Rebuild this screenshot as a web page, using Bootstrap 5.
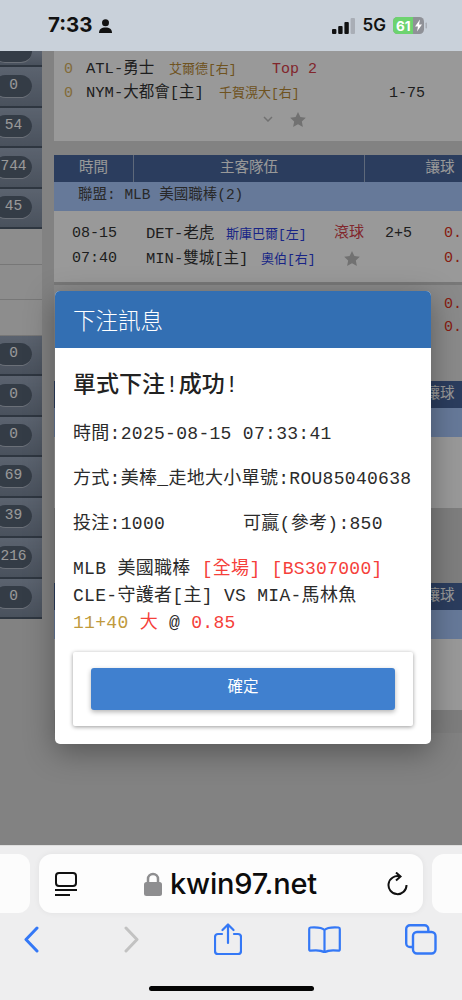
<!DOCTYPE html>
<html lang="zh-Hant">
<head>
  <meta charset="UTF-8">
  <meta name="viewport" content="width=device-width, initial-scale=1.0">
  <title>下注訊息</title>
  <link href="https://cdn.jsdelivr.net/npm/bootstrap@5.3.0/dist/css/bootstrap.min.css" rel="stylesheet">
  <style>
    html, body { width: 462px; height: 1000px; overflow: hidden; }
    body { font-family: "Liberation Mono", "Noto Sans CJK TC", monospace; color: #333; background: #eeeeef; }
    .sans { font-family: "Inter", "Liberation Sans", sans-serif; }

    /* status bar */
    .status-bar { height: 51px; background: #c9d1da; padding: 0 34px 0 48px; flex: none; }
    .clock { font-size: 20.5px; font-weight: 700; color: #111; line-height: 1; }
    .person-gap { gap: 6px; }
    .net-gap { gap: 7px; }
    .net { font-size: 17px; font-weight: 600; color: #111; line-height: 1; }

    /* page behind the dialog */
    .viewport { height: 794px; flex: none; background: #d9d9d9; overflow: hidden; }
    .dim-layer { position: absolute; inset: 0; background: rgba(0, 0, 0, .4); }
    .side-col { width: 42px; flex: none; }
    .side-row { height: 40.5px; overflow: hidden; background: linear-gradient(#98a5b9, #7b889b); border-bottom: 2px solid #4d5a6b; }
    .side-cut { height: 16px; align-items: flex-end; }
    .side-cut .side-pill { margin-bottom: 2px; height: 22px; }
    .side-pill { width: 38px; height: 23px; margin-left: -6px; border-radius: 12px; background: #586476; border-bottom: 1px solid #b2bbc8; color: #fff; font-size: 14.5px; padding-left: 1px; }
    .side-empty { height: 35.5px; background: #ececec; border-bottom: 1px solid #c6c6c6; }
    .main-col { margin-left: 12px; width: 408px; flex: none; overflow: hidden; }

    .top-card { height: 90px; background: #fff; padding-top: 7px; margin-bottom: 14px; }
    .line-a, .line-b, .line-c, .line-d { display: grid; height: 24px; align-items: center; white-space: nowrap; font-size: 15.5px; }
    .line-a, .line-b { padding-left: 10px; column-gap: 12px; }
    .line-a { grid-template-columns: 10px 71px 91px 60px; }
    .line-b { grid-template-columns: 10px 121px 158px 60px; }
    .line-c { grid-template-columns: 74px 80px 108px 51px 59px 30px; padding-left: 18px; height: 25px; }
    .line-d { grid-template-columns: 74px 115px 83px 100px 30px; padding-left: 18px; height: 25px; }
    .gold-num { color: #d9b25f; font-size: 15px; }
    .pitcher-gold { color: #b98a35; font-size: 13px; }
    .pitcher-blue { color: #2a3de0; font-size: 13px; }
    .tag-red { color: #d8404a; font-size: 15px; }
    .odds-red { color: #e03020; font-size: 15px; }
    .time-txt { font-size: 15px; letter-spacing: 0; }
    .top-icons { height: 24px; padding: 2px 0 0 209px; gap: 17px; }

    .lane-head { height: 27px; background: #49679d; color: #fff; font-size: 14.5px; }
    .lane-head > div { text-align: center; line-height: 27px; border-right: 1px solid #9db0cc; }
    .lane-time { width: 80px; }
    .lane-team { width: 231px; }
    .lane-odds { width: 97px; border-right: 0 !important; padding-left: 53px; }
    .lane-league { height: 29px; background: #aacaff; padding-left: 24px; font-size: 14.5px; line-height: 27px; color: #444; white-space: pre; }
    .match-body { height: 71px; background: #fff; padding-top: 9px; }
    .match-end { border-bottom: 3px solid #c9c9c9; height: 74px; padding-top: 11px; }
    .match-next { height: 96px; background: #e6e6e6; padding-top: 8px; }
    .odds-only { height: 23px; padding-left: 390px; line-height: 23px; }
    .lane-tail { height: 75px; background: #d2d2d2; }
    .lane-tail-sm { height: 23px; background: #d0d0d0; }

    /* dialog */
    .bet-dialog { position: absolute; left: 55px; top: 240px; width: 376px; }
    .bet-dialog .modal-content { background: #fff; border: 0; border-radius: 5px; box-shadow: 0 8px 30px rgba(0, 0, 0, .35); overflow: hidden; }
    .bet-head { background: #336fb3; color: #fff; height: 57px; padding: 0 18px; border: 0; border-radius: 0; }
    .bet-title { font-family: "Noto Sans CJK TC", sans-serif; font-size: 22.5px; font-weight: 300; margin: 0; line-height: 1; }
    .bet-body { padding: 22px 18px 18px; font-size: 18px; line-height: 27px; color: #2b2b2b; white-space: nowrap; letter-spacing: .3px; }
    .bet-ok { font-size: 23px; line-height: 33px; font-weight: 500; color: #222; margin: 0 0 18px; letter-spacing: 0; }
    .bet-line { margin: 0 0 18px; }
    .bet-stake { display: inline-block; width: 170px; }
    .bet-block { margin: 0 0 14.5px; }
    .txt-red { color: #f5403a; }
    .txt-gold { color: #c09a3c; }
    .confirm-card { padding: 16px 18px; border: 0; border-radius: 2px; box-shadow: 0 1px 4px rgba(0, 0, 0, .4); }
    .confirm-btn { height: 42px; font-family: "Noto Sans CJK TC", sans-serif; font-size: 15.5px; line-height: 1; background: #4080cf; border: 0; border-radius: 3px; padding: 0 0 5px; color: #fff; box-shadow: 0 2px 5px rgba(0, 0, 0, .3); }

    /* safari bars */
    .browser-bar { height: 155px; flex: none; background: #eeeeef; border-top: 1px solid #dedede; padding-top: 8px; }
    .tab-stub { width: 30px; height: 59px; background: #fcfcfc; flex: none; }
    .tab-stub-l { border-radius: 0 12px 12px 0; }
    .tab-stub-r { border-radius: 12px 0 0 12px; }
    .url-box { width: 384px; height: 59px; margin: 0 9px; background: #fdfdfd; border-radius: 13px; padding: 0 15px 0 16px; box-shadow: 0 0 6px rgba(0, 0, 0, .06); }
    .url-host { font-size: 29px; font-weight: 500; color: #0c0c0c; line-height: 1; letter-spacing: -.2px; }
    .url-mid { gap: 8px; margin-left: -3px; }
    .tool-row { display: grid; grid-template-columns: 101px 90px 94px 97px 32px; padding: 8px 0 0 23px; height: 44px; align-items: center; }
    .home-bar { width: 165px; height: 5px; background: #050505; border-radius: 3px; margin: 29px auto 0; }
  </style>
</head>
<body class="d-flex flex-column">
  <!-- status bar -->
  <div class="status-bar d-flex align-items-center justify-content-between sans">
    <div class="d-flex align-items-center person-gap">
      <span class="clock">7:33</span>
      <svg width="13" height="14" viewBox="0 0 13 14"><circle cx="6.5" cy="3.8" r="3.5" fill="#111"/><path d="M0 14c0-4 2.5-5.6 6.5-5.6S13 10 13 14z" fill="#111"/></svg>
    </div>
    <div class="d-flex align-items-center net-gap">
      <svg width="24" height="16" viewBox="0 0 24 16"><rect x="0" y="11" width="4.4" height="5" rx="1" fill="#111"/><rect x="6.2" y="8" width="4.4" height="8" rx="1" fill="#111"/><rect x="12.4" y="4" width="4.4" height="12" rx="1" fill="#111"/><rect x="18.6" y="0" width="4.4" height="16" rx="1" fill="#a9aeb6"/></svg>
      <span class="net">5G</span>
      <svg width="35" height="17" viewBox="0 0 35 17"><rect x="0" y="0" width="31" height="17" rx="4.5" fill="#8f9197"/><path d="M4.5 0H20v17H4.5A4.5 4.5 0 0 1 0 12.500V4.500A4.500 4.500 0 0 1 4.500 0z" fill="#6dd36f"/><rect x="32.500" y="5.500" width="1.500" height="6" rx=".7" fill="#a9aeb6"/><text x="3" y="13.500" font-family="Inter, sans-serif" font-size="13.500" font-weight="700" fill="#fff">61</text><path d="M27 2.500l-5 7h3l-1 5 5-7h-3z" fill="#fff"/></svg>
    </div>
  </div>

  <div class="viewport position-relative d-flex">
    <!-- left counts -->
    <div class="side-col">
      <div class="side-row side-cut d-flex"><span class="side-pill"></span></div>
      <div class="side-row d-flex align-items-center"><span class="side-pill d-flex align-items-center justify-content-center">0</span></div>
      <div class="side-row d-flex align-items-center"><span class="side-pill d-flex align-items-center justify-content-center">54</span></div>
      <div class="side-row d-flex align-items-center"><span class="side-pill d-flex align-items-center justify-content-center">744</span></div>
      <div class="side-row d-flex align-items-center"><span class="side-pill d-flex align-items-center justify-content-center">45</span></div>
      <div class="side-empty"></div>
      <div class="side-empty"></div>
      <div class="side-empty"></div>
      <div class="side-row d-flex align-items-center"><span class="side-pill d-flex align-items-center justify-content-center">0</span></div>
      <div class="side-row d-flex align-items-center"><span class="side-pill d-flex align-items-center justify-content-center">0</span></div>
      <div class="side-row d-flex align-items-center"><span class="side-pill d-flex align-items-center justify-content-center">0</span></div>
      <div class="side-row d-flex align-items-center"><span class="side-pill d-flex align-items-center justify-content-center">69</span></div>
      <div class="side-row d-flex align-items-center"><span class="side-pill d-flex align-items-center justify-content-center">39</span></div>
      <div class="side-row d-flex align-items-center"><span class="side-pill d-flex align-items-center justify-content-center">216</span></div>
      <div class="side-row d-flex align-items-center"><span class="side-pill d-flex align-items-center justify-content-center">0</span></div>
    </div>

    <!-- match list -->
    <div class="main-col">
      <div class="top-card">
        <div class="line-a"><span class="gold-num">0</span><span>ATL-勇士</span><span class="pitcher-gold">艾爾德[右]</span><span class="tag-red">Top 2</span></div>
        <div class="line-b"><span class="gold-num">0</span><span>NYM-大都會[主]</span><span class="pitcher-gold">千賀滉大[右]</span><span class="time-txt">1-75</span></div>
        <div class="top-icons d-flex align-items-center">
          <svg width="10" height="6" viewBox="0 0 10 6"><path d="M1 1l4 4 4-4" fill="none" stroke="#bdbdbd" stroke-width="1.500"/></svg>
          <svg width="16" height="15" viewBox="0 0 24 23"><path d="M12 0l3.700 7.800 8.300 1-6.100 5.800 1.600 8.400L12 18.800 4.500 23l1.600-8.400L0 8.800l8.300-1z" fill="#bdbdbd"/></svg>
        </div>
      </div>

      <div class="lane-head d-flex"><div class="lane-time">時間</div><div class="lane-team">主客隊伍</div><div class="lane-odds">讓球</div></div>
      <div class="lane-league">聯盟: MLB 美國職棒(2)</div>
      <div class="match-body match-end">
        <div class="line-c"><span class="time-txt">08-15</span><span>DET-老虎</span><span class="pitcher-blue">斯庫巴爾[左]</span><span class="tag-red">滾球</span><span class="time-txt">2+5</span><span class="odds-red">0.85</span></div>
        <div class="line-d"><span class="time-txt">07:40</span><span>MIN-雙城[主]</span><span class="pitcher-blue">奧伯[右]</span><span><svg width="16" height="15" viewBox="0 0 24 23"><path d="M12 0l3.700 7.800 8.300 1-6.100 5.800 1.600 8.400L12 18.800 4.500 23l1.600-8.400L0 8.800l8.300-1z" fill="#bdbdbd"/></svg></span><span class="odds-red">0.85</span></div>
      </div>
      <div class="match-next">
        <div class="odds-only odds-red">0.85</div>
        <div class="odds-only odds-red">0.85</div>
      </div>

      <!-- these two lanes sit mostly behind the dialog -->
      <div class="lane-head d-flex"><div class="lane-time"></div><div class="lane-team"></div><div class="lane-odds">讓球</div></div>
      <div class="lane-league"></div>
      <div class="match-body"></div>
      <div class="lane-tail"></div>

      <div class="lane-head d-flex"><div class="lane-time"></div><div class="lane-team"></div><div class="lane-odds">讓球</div></div>
      <div class="lane-league"></div>
      <div class="match-body"></div>
      <div class="lane-tail-sm"></div>
    </div>

    <div class="dim-layer"></div>

    <!-- result dialog -->
    <div class="bet-dialog">
      <div class="modal-content">
        <div class="modal-header bet-head"><h5 class="bet-title">下注訊息</h5></div>
        <div class="modal-body bet-body">
          <p class="bet-ok">單式下注!成功!</p>
          <p class="bet-line">時間:2025-08-15 07:33:41</p>
          <p class="bet-line">方式:美棒_走地大小單號:ROU85040638</p>
          <p class="bet-line"><span class="bet-stake">投注:1000</span>可贏(參考):850</p>
          <div class="bet-block">
            <div>MLB 美國職棒 <span class="txt-red">[全場] [BS307000]</span></div>
            <div>CLE-守護者[主] VS MIA-馬林魚</div>
            <div><span class="txt-gold">11+40</span> <span class="txt-red">大</span> @ <span class="txt-red">0.85</span></div>
          </div>
          <div class="card confirm-card">
            <button type="button" class="btn btn-primary w-100 confirm-btn">確定</button>
          </div>
        </div>
      </div>
    </div>
  </div>

  <!-- safari bars -->
  <div class="browser-bar sans">
    <div class="d-flex">
      <div class="tab-stub tab-stub-l"></div>
      <div class="url-box d-flex align-items-center justify-content-between">
        <svg width="22" height="24" viewBox="0 0 22 24"><rect x="1" y="1" width="20" height="13" rx="3" fill="none" stroke="#111" stroke-width="2"/><path d="M0 18h22M0 23h15" stroke="#111" stroke-width="2"/></svg>
        <div class="d-flex align-items-center url-mid">
          <svg width="18" height="24" viewBox="0 0 18 24"><path d="M4 11V7a5 5 0 0 1 10 0v4" fill="none" stroke="#8e8e90" stroke-width="2.500"/><rect x="0" y="10" width="18" height="14" rx="2.500" fill="#8e8e90"/></svg>
          <span class="url-host">kwin97.net</span>
        </div>
        <svg width="21" height="24" viewBox="0 0 21 24"><path d="M13 4.500A9 9 0 1 0 19.500 13" fill="none" stroke="#111" stroke-width="2"/><path d="M9 .5L13.500 4.500 9 8.500" fill="none" stroke="#111" stroke-width="2"/></svg>
      </div>
      <div class="tab-stub tab-stub-r"></div>
    </div>
    <div class="tool-row">
      <svg width="16" height="27" viewBox="0 0 16 27"><path d="M14 2L3 13.500 14 25" fill="none" stroke="#3478f6" stroke-width="3" stroke-linecap="round" stroke-linejoin="round"/></svg>
      <svg width="16" height="27" viewBox="0 0 16 27"><path d="M2 2l11 11.500L2 25" fill="none" stroke="#c2c2c2" stroke-width="3" stroke-linecap="round" stroke-linejoin="round"/></svg>
      <svg width="28" height="33" viewBox="0 0 28 33"><path d="M8 11H4a3 3 0 0 0-3 3v14a3 3 0 0 0 3 3h20a3 3 0 0 0 3-3V14a3 3 0 0 0-3-3h-4" fill="none" stroke="#3478f6" stroke-width="2.200" stroke-linecap="round"/><path d="M14 20V2M8.500 7L14 1.500 19.500 7" fill="none" stroke="#3478f6" stroke-width="2.200" stroke-linecap="round" stroke-linejoin="round"/></svg>
      <svg width="33" height="27" viewBox="0 0 33 27"><path d="M16.500 4C14 1.500 10 1 2.500 1.500 1.700 1.600 1.200 2.200 1.200 3v20.500c0 .8.600 1.300 1.300 1.200 6-.8 11-.5 14 1.800 3-2.300 8-2.600 14-1.800.7.100 1.300-.4 1.300-1.200V3c0-.8-.5-1.400-1.300-1.500C23 1 19 1.500 16.500 4zm0 0v22" fill="none" stroke="#3478f6" stroke-width="2.200" stroke-linejoin="round"/></svg>
      <svg width="32" height="31" viewBox="0 0 32 31"><rect x="8" y="8" width="22.500" height="21.500" rx="4" fill="none" stroke="#3478f6" stroke-width="2.400"/><path d="M8 23H5a3.800 3.800 0 0 1-3.800-3.800V5A3.800 3.800 0 0 1 5 1.200h14.500A3.800 3.800 0 0 1 23.300 5v3" fill="none" stroke="#3478f6" stroke-width="2.400"/></svg>
    </div>
    <div class="home-bar"></div>
  </div>
  <script src="https://cdn.jsdelivr.net/npm/bootstrap@5.3.0/dist/js/bootstrap.bundle.min.js"></script>
</body>
</html>
